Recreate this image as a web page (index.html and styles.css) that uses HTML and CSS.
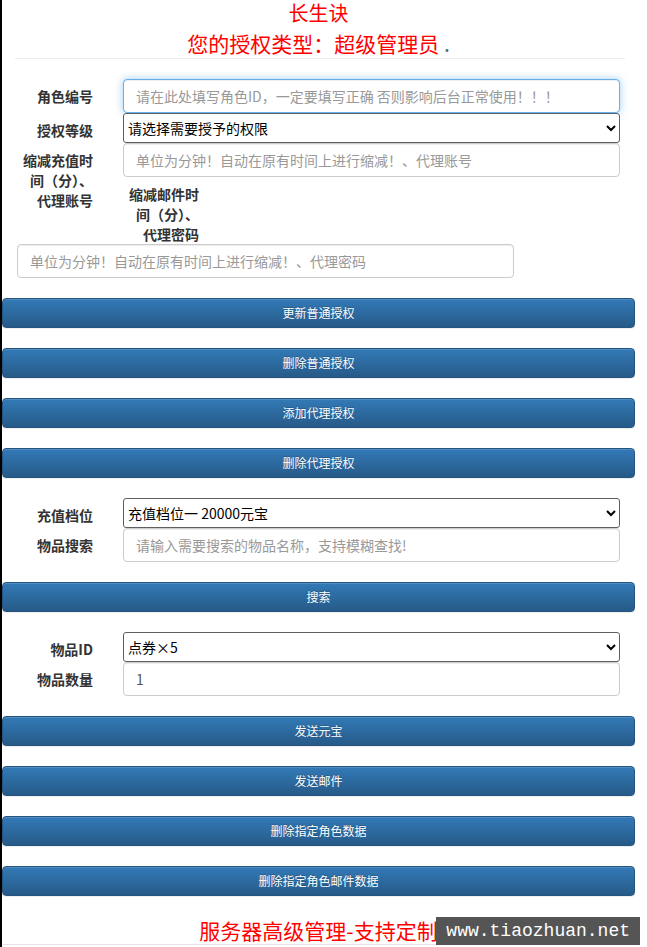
FILE: index.html
```html
<!DOCTYPE html>
<html lang="zh-CN">
<head>
  <meta charset="UTF-8" />
  <meta name="viewport" content="width=device-width, initial-scale=1.0"/>
  <title>长生诀 后台管理</title>
  <link rel="stylesheet" href="styles.css">
</head>
<body>
  <div class="wrap">
    <div class="title">长生诀</div>
    <div class="subtitle">您的授权类型：超级管理员 <span class="dot">.</span></div>
    <hr class="line">

    <!-- 授权 -->
    <div class="row">
      <label class="lbl">角色编号</label>
      <div class="ctl"><input class="field focus" type="text" autofocus placeholder="请在此处填写角色ID，一定要填写正确 否则影响后台正常使用！！！"></div>
    </div>
    <div class="row">
      <label class="lbl">授权等级</label>
      <div class="ctl">
        <select class="pick">
          <option>请选择需要授予的权限</option>
        </select>
      </div>
    </div>
    <div class="float-block">
      <label class="lbl">缩减充值时间（分）、代理账号</label>
      <div class="ctl"><input class="field" type="text" placeholder="单位为分钟！自动在原有时间上进行缩减！、代理账号"></div>
      <label class="lbl">缩减邮件时间（分）、代理密码</label>
      <div class="ctl"><input class="field" type="text" placeholder="单位为分钟！自动在原有时间上进行缩减！、代理密码"></div>
    </div>

    <div class="actions">
      <button class="btn">更新普通授权</button>
      <button class="btn">删除普通授权</button>
      <button class="btn">添加代理授权</button>
      <button class="btn">删除代理授权</button>
    </div>

    <!-- 充值 -->
    <div class="row">
      <label class="lbl">充值档位</label>
      <div class="ctl">
        <select class="pick">
          <option>充值档位一 20000元宝</option>
        </select>
      </div>
    </div>
    <div class="row">
      <label class="lbl">物品搜索</label>
      <div class="ctl"><input class="field" type="text" placeholder="请输入需要搜索的物品名称，支持模糊查找!"></div>
    </div>

    <div class="actions">
      <button class="btn">搜索</button>
    </div>

    <!-- 物品 -->
    <div class="row">
      <label class="lbl">物品ID</label>
      <div class="ctl">
        <select class="pick">
          <option>点券×5</option>
        </select>
      </div>
    </div>
    <div class="row">
      <label class="lbl">物品数量</label>
      <div class="ctl"><input class="field" type="text" value="1"></div>
    </div>

    <div class="actions">
      <button class="btn">发送元宝</button>
      <button class="btn">发送邮件</button>
      <button class="btn">删除指定角色数据</button>
      <button class="btn">删除指定角色邮件数据</button>
    </div>

    <div class="footer">服务器高级管理-支持定制</div>
  </div>

  <div class="watermark">www.tiaozhuan.net</div>
</body>
</html>
```

FILE: styles.css
```css
* {
  box-sizing: border-box;
}

body {
  margin: 0;
  border-left: 2px solid #000;
  min-height: 100vh;
  position: relative;
  background: #fff;
  color: #333;
  font-family: "Noto Sans CJK SC", "Liberation Sans", sans-serif;
  font-size: 14px;
  line-height: 20px;
}

.wrap {
  width: 633px;
}

.title {
  text-align: center;
  color: #f00;
  font-size: 20px;
  line-height: 24px;
  padding-top: 1px;
}

.subtitle {
  text-align: center;
  color: #f00;
  font-size: 21px;
  line-height: 30px;
  padding-top: 3px;
}

.dot {
  color: #3d6f80;
}

.line {
  margin: 0 10px 20px 13px;
  border: 0;
  border-top: 1px solid #ebebeb;
}

.row {
  display: flex;
  align-items: flex-start;
}

.lbl {
  display: block;
  flex: none;
  width: 106px;
  padding: 7px 15px 0;
  text-align: right;
  font-weight: bold;
  color: #333;
}

.ctl {
  width: 527px;
  padding: 0 15px;
}

.float-block::after {
  content: "";
  display: table;
  clear: both;
}

.float-block .lbl,
.float-block .ctl {
  float: left;
}

.field {
  display: block;
  width: 100%;
  height: 34px;
  padding: 6px 12px;
  font: inherit;
  color: #555;
  background: #fff;
  border: 1px solid #ccc;
  border-radius: 4px;
  box-shadow: inset 0 1px 1px rgba(0, 0, 0, 0.075);
}

.field::placeholder {
  color: #999;
}

.field:focus,
.field.focus {
  outline: 0;
  border-color: #66afe9;
  box-shadow: inset 0 1px 1px rgba(0, 0, 0, 0.075), 0 0 8px rgba(102, 175, 233, 0.6);
}

.pick {
  display: block;
  width: 100%;
  height: 30px;
  padding: 0;
  font: inherit;
  color: #000;
  background: #fff;
  border: 1px solid #5f5f5f;
  border-radius: 3px;
}

.actions {
  margin-top: 20px;
}

.btn {
  display: block;
  width: 100%;
  height: 30px;
  margin: 0 0 20px;
  padding: 0;
  font-family: inherit;
  font-size: 12px;
  line-height: 28px;
  color: #fff;
  text-shadow: 0 -1px 0 rgba(0, 0, 0, 0.2);
  background: linear-gradient(to bottom, #337ab7 0, #265a88 100%);
  border: 1px solid #245580;
  border-radius: 4px;
  box-shadow: inset 0 1px 0 rgba(255, 255, 255, 0.15), 0 1px 1px rgba(0, 0, 0, 0.075);
  cursor: pointer;
}

.footer {
  text-align: center;
  color: #f00;
  font-size: 21px;
  line-height: 28px;
  border-bottom: 1px solid #e5e5e5;
}

.watermark {
  position: absolute;
  right: 7px;
  bottom: 2px;
  height: 28px;
  padding: 0 10px;
  background: #555;
  color: #fff;
  font-family: "Liberation Mono", monospace;
  font-size: 18px;
  line-height: 28px;
  white-space: nowrap;
}
```
